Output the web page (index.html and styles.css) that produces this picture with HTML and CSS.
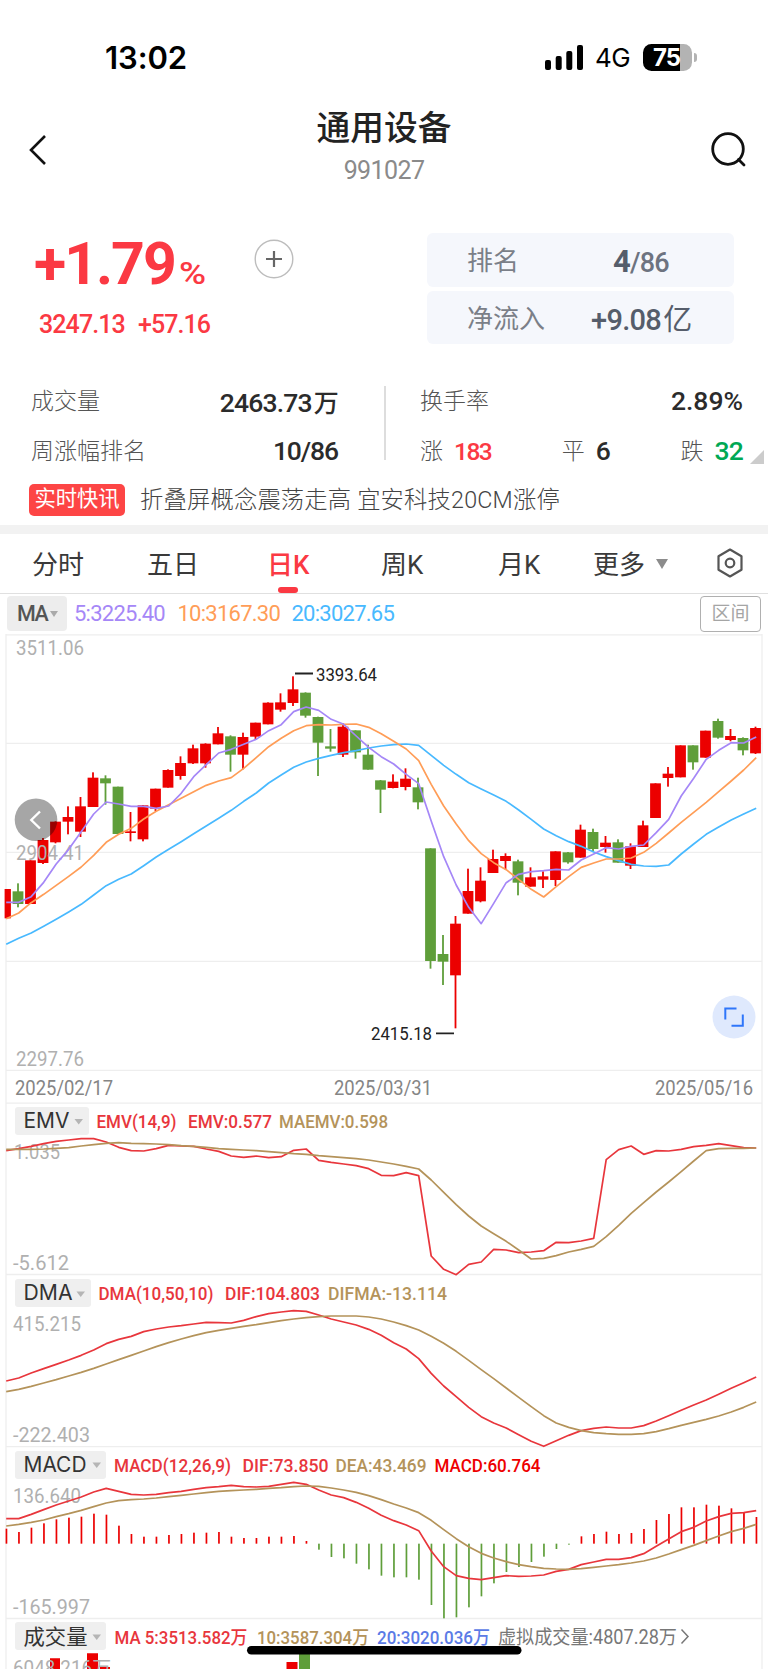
FILE: index.html
```html
<!DOCTYPE html>
<html lang="zh-CN">
<head>
<meta charset="utf-8">
<title>通用设备 991027</title>
<link rel="stylesheet" href="styles.css">
</head>
<body>
<div class="status">
  <span class="clock">13:02</span>
  <span class="status-right">
    <svg class="signal" viewBox="0 0 38 25"><rect x="0" y="15" width="6" height="10" rx="2"/><rect x="10.7" y="11" width="6" height="14" rx="2"/><rect x="21.3" y="6" width="6" height="19" rx="2"/><rect x="32" y="0" width="6" height="25" rx="2"/></svg>
    <span class="net">4G</span>
    <span class="battery"><span class="level">75</span></span><i class="nub"></i>
  </span>
</div>
<header class="header">
  <svg class="back" viewBox="0 0 18 32"><path d="M16 2 2 16 16 30"/></svg>
  <div class="titles"><h1>通用设备</h1><p>991027</p></div>
  <svg class="search" viewBox="0 0 36 36"><circle cx="17" cy="17" r="15.3"/><path d="M27.5 27.5 33 33"/></svg>
</header>
<section class="summary">
  <div class="quote">
    <div class="pct">+1.79<small>%</small></div>
    <div class="price"><span>3247.13</span><span>+57.16</span></div>
  </div>
  <svg class="add" viewBox="0 0 40 40"><circle cx="20" cy="20" r="18.8"/><path d="M12 20H28M20 12V28"/></svg>
  <div class="boxes">
    <div class="box"><span>排名</span><b class="rank"><strong>4</strong>/86</b></div>
    <div class="box"><span>净流入</span><b class="flow">+9.08<em>亿</em></b></div>
  </div>
</section>
<section class="stats">
  <div class="stat-col left">
    <div class="row"><span>成交量</span><b>2463.73<em>万</em></b></div>
    <div class="row"><span>周涨幅排名</span><b class="week">10/86</b></div>
  </div>
  <div class="stat-col right">
    <div class="row"><span>换手率</span><b class="turnover">2.89%</b></div>
    <div class="row"><p><span>涨</span><b class="up">183</b></p><p><span>平</span><b>6</b></p><p><span>跌</span><b class="down">32</b></p></div>
  </div>
  <i class="corner"></i>
</section>
<section class="news"><span class="tag">实时快讯</span><span class="headline">折叠屏概念震荡走高 宜安科技20CM涨停</span></section>
<nav class="tabs">
  <span class="t1">分时</span><span class="t2">五日</span><span class="t3 active">日K</span><span class="t4">周K</span><span class="t5">月K</span><span class="t6">更多</span><i class="caret"></i>
  <svg class="gear" viewBox="0 0 28 30"><path d="M14 1.5 25.5 8.2V21.8L14 28.5 2.5 21.8V8.2Z"/><circle cx="14" cy="15" r="4.3"/></svg>
</nav>
<section class="legend">
  <span class="pill">MA<i></i></span>
  <span class="ma5">5:3225.40</span><span class="ma10">10:3167.30</span><span class="ma20">20:3027.65</span>
  <span class="range">区间</span>
</section>
<main class="charts">
  <svg class="plot" viewBox="0 633 768 470" height="470">
    <path class="grid" d="M6 634.8H762M6 743.3H762M6 852.3H762M6 961.3H762M6 1070.4H762M6 634V1103M762 634V1103"/>
    <g id="candles"></g>
    <g class="axis">
      <text x="16" y="654.6" textLength="68" lengthAdjust="spacingAndGlyphs">3511.06</text>
      <text x="16" y="860" textLength="68" lengthAdjust="spacingAndGlyphs">2904.41</text>
      <text x="16" y="1066" textLength="68" lengthAdjust="spacingAndGlyphs">2297.76</text>
    </g>
    <g id="averages"></g>
    <path class="tick" d="M295 673.5H313M436 1033.3H454"/>
    <g class="mark">
      <text x="316" y="680.5" textLength="61" lengthAdjust="spacingAndGlyphs">3393.64</text>
      <text x="371" y="1039.8" textLength="61" lengthAdjust="spacingAndGlyphs">2415.18</text>
    </g>
    <circle class="prev" cx="36" cy="819.8" r="21.3"/><path class="prev-arrow" d="M40 811.5 31.3 820 40 828.5"/>
    <circle class="expand" cx="734" cy="1017" r="21.5"/><path class="expand-icon" d="M725.3 1019.5V1008.5H736.5M731.5 1025.8H742.8V1014.5"/>
    <g class="date">
      <text x="15" y="1095" textLength="98" lengthAdjust="spacingAndGlyphs">2025/02/17</text>
      <text x="334" y="1095" textLength="98" lengthAdjust="spacingAndGlyphs">2025/03/31</text>
      <text x="655" y="1095" textLength="98" lengthAdjust="spacingAndGlyphs">2025/05/16</text>
    </g>
  </svg>
  <svg class="plot" viewBox="0 1103 768 172" height="172">
    <path class="grid" d="M6 1103.2H762M6 1274.5H762M6 1103V1275M762 1103V1275"/>
    <rect class="chip" x="15" y="1107" width="74" height="28" rx="3"/><text class="name" x="23.5" y="1127.5" textLength="46" lengthAdjust="spacingAndGlyphs">EMV</text><path class="drop" d="M74.5 1119H83L78.7 1124.5Z"/>
    <g class="val">
      <text class="red" x="96.5" y="1128" textLength="80" lengthAdjust="spacingAndGlyphs">EMV(14,9)</text>
      <text class="red" x="188" y="1128" textLength="84" lengthAdjust="spacingAndGlyphs">EMV:0.577</text>
      <text class="tan" x="279" y="1128" textLength="109" lengthAdjust="spacingAndGlyphs">MAEMV:0.598</text>
    </g>
    <g class="axis"><text x="14" y="1159" textLength="46" lengthAdjust="spacingAndGlyphs">1.035</text><text x="13" y="1270" textLength="56" lengthAdjust="spacingAndGlyphs">-5.612</text></g>
    <g id="emv"></g>
  </svg>
  <svg class="plot" viewBox="0 1275 768 172" height="172">
    <path class="grid" d="M6 1446.6H762M6 1275V1447M762 1275V1447"/>
    <rect class="chip" x="15" y="1279" width="76" height="28" rx="3"/><text class="name" x="23.5" y="1299.5" textLength="49" lengthAdjust="spacingAndGlyphs">DMA</text><path class="drop" d="M76.5 1291.5H85L80.7 1297Z"/>
    <g class="val">
      <text class="red" x="98.5" y="1300" textLength="115" lengthAdjust="spacingAndGlyphs">DMA(10,50,10)</text>
      <text class="red" x="225" y="1300" textLength="95" lengthAdjust="spacingAndGlyphs">DIF:104.803</text>
      <text class="tan" x="328" y="1300" textLength="119" lengthAdjust="spacingAndGlyphs">DIFMA:-13.114</text>
    </g>
    <g class="axis"><text x="13" y="1331" textLength="68" lengthAdjust="spacingAndGlyphs">415.215</text><text x="13" y="1442" textLength="77" lengthAdjust="spacingAndGlyphs">-222.403</text></g>
    <g id="dma"></g>
  </svg>
  <svg class="plot" viewBox="0 1447 768 172" height="172">
    <path class="grid" d="M6 1618.5H762M6 1447V1619M762 1447V1619"/>
    <rect class="chip" x="15" y="1451" width="91" height="28" rx="3"/><text class="name" x="23.5" y="1471.5" textLength="63" lengthAdjust="spacingAndGlyphs">MACD</text><path class="drop" d="M92.5 1462.5H101L96.7 1468Z"/>
    <g class="val">
      <text class="red" x="114" y="1472" textLength="117" lengthAdjust="spacingAndGlyphs">MACD(12,26,9)</text>
      <text class="red" x="242.5" y="1472" textLength="86" lengthAdjust="spacingAndGlyphs">DIF:73.850</text>
      <text class="tan" x="335.5" y="1472" textLength="91" lengthAdjust="spacingAndGlyphs">DEA:43.469</text>
      <text class="bright" x="434.5" y="1472" textLength="106" lengthAdjust="spacingAndGlyphs">MACD:60.764</text>
    </g>
    <g class="axis"><text x="13" y="1503" textLength="68" lengthAdjust="spacingAndGlyphs">136.640</text><text x="13" y="1613.6" textLength="77" lengthAdjust="spacingAndGlyphs">-165.997</text></g>
    <g id="macd"></g>
  </svg>
  <svg class="plot" viewBox="0 1619 768 50" height="50">
    <path class="grid" d="M6 1619V1669M762 1619V1669"/>
    <path class="vol-up" d="M50 1658.3H60V1669H50ZM87 1653.3H98V1669H87ZM100 1667H110V1669H100ZM286.5 1662H297.5V1669H286.5Z"/><path class="vol-down" d="M299 1651H310V1669H299Z"/>
    <rect class="chip" x="15" y="1622" width="91" height="28" rx="3"/><text class="name" x="23.5" y="1643.5" textLength="64" lengthAdjust="spacingAndGlyphs">成交量</text><path class="drop" d="M92.5 1634.5H101L96.7 1640Z"/>
    <g class="val">
      <text class="red" x="114.5" y="1644" textLength="133" lengthAdjust="spacingAndGlyphs">MA 5:3513.582万</text>
      <text class="tan" x="257" y="1644" textLength="112" lengthAdjust="spacingAndGlyphs">10:3587.304万</text>
      <text class="blue" x="377" y="1644" textLength="113" lengthAdjust="spacingAndGlyphs">20:3020.036万</text>
      <text class="gray" x="498" y="1643.5" textLength="179" lengthAdjust="spacingAndGlyphs">虚拟成交量:4807.28万</text>
    </g>
    <path class="more" d="M681.5 1629.5 688 1636.5 681.5 1643.5"/>
    <g class="axis"><text x="13" y="1674.5" textLength="98" lengthAdjust="spacingAndGlyphs">6048.216万</text></g>
    <rect class="home" x="247" y="1646" width="274.5" height="8.6" rx="4.3"/>
  </svg>
</main>
<script src="chart.js"></script>
</body>
</html>
```
FILE: styles.css
```css
* { box-sizing: border-box; }
body { margin: 0; width: 768px; height: 1669px; overflow: hidden; background: #fff; color: #333; font-family: Roboto, "Noto Sans CJK SC", sans-serif; }
h1, p { margin: 0; }
em, i { font-style: normal; }
b { font-weight: 500; }
svg { display: block; flex: none; }

.status { height: 100px; padding: 14px 71px 0 105px; display: flex; justify-content: space-between; align-items: center; color: #000; font-family: Inter, sans-serif; }
.clock { font-size: 31px; font-weight: 600; letter-spacing: -.1px; }
.status-right { display: flex; align-items: center; }
.signal { width: 38px; height: 25px; }
.net { font-size: 26px; margin-left: 12px; width: 48px; letter-spacing: -.5px; }
.battery { width: 49px; height: 27px; border-radius: 8.5px; overflow: hidden; background: linear-gradient(90deg, #000 37px, #b3b3b3 37px); }
.level { display: block; padding-left: 10px; font-size: 24px; line-height: 27px; font-weight: 700; color: #fff; letter-spacing: -1px; }
.nub { width: 3px; height: 9px; margin-left: 2px; border-radius: 0 3px 3px 0; background: #b3b3b3; }

.header { height: 100px; padding: 0 21px 0 29px; display: flex; justify-content: space-between; align-items: center; }
.back { width: 18px; height: 32px; fill: none; stroke: #111; stroke-width: 2.6; }
.search { width: 36px; height: 36px; fill: none; stroke: #111; stroke-width: 2.8; stroke-linecap: round; }
.titles { text-align: center; margin: -8px 0 0 10px; }
.titles h1 { font-size: 33.7px; line-height: 40px; font-weight: 500; color: #222; }
.titles p { margin-top: 9px; font-size: 25px; line-height: 26px; color: #8a8a8a; letter-spacing: -.6px; }

.summary { height: 170px; display: flex; padding: 33px 34px 0 34px; align-items: flex-start; }
.quote { width: 221px; color: #fb3943; }
.pct { height: 62px; line-height: 62px; font-size: 59px; font-weight: 700; letter-spacing: -2px; white-space: nowrap; }
.pct small { font-size: 32px; font-weight: 500; margin-left: 4px; display: inline-block; transform: scaleX(1.15); transform-origin: left; }
.price { margin-top: 14px; padding-left: 5px; display: flex; gap: 13px; font-size: 25px; line-height: 32px; font-weight: 500; letter-spacing: -.9px; }
.add { width: 40px; height: 40px; margin: 6px 131px 0 -1px; fill: none; stroke: #bdbdbd; stroke-width: 1.4; }
.add path { stroke: #666; stroke-width: 2.2; }
.boxes { margin-left: auto; width: 307px; display: grid; gap: 4px; }
.box { height: 53.5px; border-radius: 6px; background: #f5f7fc; padding-left: 40px; display: flex; align-items: center; font-size: 26px; color: #7b7f88; }
.box > span { margin-top: -2px; }
.box b { color: #6d7380; font-size: 27px; letter-spacing: -.8px; }
.box .rank { margin-left: 94px; padding-top: 3px; }
.rank strong { font-size: 31px; color: #555d6b; }
.box .flow { margin-left: 46px; font-size: 29px; letter-spacing: -.7px; color: #555d6b; }
.flow em { font-weight: 400; margin-left: 2px; }

.stats { height: 104px; padding: 4px 25px 0 31px; display: flex; position: relative; margin-top: 5px; }
.stat-col { display: grid; grid-template-rows: 50px 50px; }
.left { width: 307px; }
.right { margin-left: 46px; padding-left: 36px; flex: 1; position: relative; }
.right::before { content: ""; position: absolute; left: 0; top: 7px; height: 74px; width: 1.5px; background: #ddd; }
.row { display: flex; justify-content: space-between; align-items: center; height: 40px; font-size: 23px; font-weight: 300; color: #555; }
.row b { font-size: 26.5px; color: #2b2b2b; letter-spacing: -.8px; padding-top: 3px; }
.row .week { letter-spacing: -1.1px; }
.row .turnover { letter-spacing: 0; }
.row em { font-size: 25px; margin-left: 2px; }
.row p { display: flex; align-items: center; gap: 11px; }
.row .up { color: #fb3943; font-size: 24.5px; letter-spacing: -1.5px; padding-top: 4px; }
.row .down { color: #00a854; }
.corner { position: absolute; right: 4px; bottom: 15px; border-style: solid; border-width: 0 0 14px 14px; border-color: transparent transparent #ccc transparent; }

.news { height: 55px; padding: 0 29px 5px; display: flex; align-items: center; border-bottom: 9px solid #f2f2f2; }
.tag { width: 96px; height: 32px; border-radius: 5px; background: #fd4545; color: #fff; font-size: 21.3px; line-height: 30px; text-align: center; }
.headline { margin-left: 15px; font-size: 23.3px; line-height: 30px; color: #444; font-weight: 300; letter-spacing: .18px; white-space: pre; }

.tabs { height: 60px; border-bottom: 1.5px solid #e0e0e0; display: grid; grid-template-columns: 147px 120px 114px 117px 95px 63px 60px 1fr; align-items: center; font-size: 26px; color: #3a3a3a; }
.tabs span { margin-top: -2px; white-space: nowrap; }
.tabs .t1 { padding-left: 32px; }
.active { position: relative; color: #fb3943; font-weight: 500; }
.active::after { content: ""; position: absolute; left: 11px; bottom: -12px; width: 20px; height: 6px; border-radius: 3px; background: #fb3943; }
.caret { justify-self: start; border-style: solid; border-width: 10px 6.5px 0; border-color: #8c8c8c transparent transparent; }
.gear { width: 28px; height: 30px; fill: none; stroke: #555; stroke-width: 2.2; stroke-linejoin: round; margin-top: -2px; }

.legend { height: 39px; display: flex; align-items: center; padding: 0 7px; font-size: 22px; letter-spacing: -.75px; }
.pill { width: 60px; height: 35px; margin-right: 7px; padding-left: 10px; border-radius: 4px; background: #ededed; display: flex; align-items: center; gap: 3px; color: #555; font-size: 21.5px; font-weight: 500; letter-spacing: -1.6px; }
.pill i { border-style: solid; border-width: 6px 4.5px 0; border-color: #aaa transparent transparent; }
.ma5 { width: 103.5px; color: #a587f7; }
.ma10 { width: 114px; color: #ff9d57; }
.ma20 { color: #48b9ff; }
.range { margin-left: auto; width: 61px; height: 36px; border: 1.5px solid #b0b0b0; border-radius: 4px; color: #a5a5a5; font-size: 19px; letter-spacing: 0; line-height: 34px; text-align: center; }

.charts { display: flex; flex-direction: column; }
.plot { width: 768px; overflow: visible; }
.plot text { font-family: Roboto, "Noto Sans CJK SC", sans-serif; }
.grid { fill: none; stroke: #eee; stroke-width: 1.3; }
.axis { fill: #b0b0b0; font-size: 19.6px; }
.date { fill: #858585; font-size: 20px; }
.mark { fill: #222; font-size: 18.5px; }
.tick { stroke: #222; stroke-width: 1.8; }
.up-c { fill: #ec0000; stroke: none; }
.down-c { fill: #5f9e3a; }
.line { fill: none; stroke-width: 1.7; stroke-linejoin: round; }
.l-purple { stroke: #a587f7; }
.l-orange { stroke: #ff9d57; }
.l-blue { stroke: #48b9ff; }
.l-red { stroke: #e8363c; }
.l-tan { stroke: #b4935a; }
.prev { fill: rgba(0, 0, 0, .35); }
.prev-arrow { fill: none; stroke: #fff; stroke-width: 2.4; }
.expand { fill: #dfe9fd; }
.expand-icon { fill: none; stroke: #2f76fa; stroke-width: 2; }
.chip { fill: #efefef; }
.plot .name { font-family: Inter, "Noto Sans CJK SC", sans-serif; font-size: 21px; fill: #333; }
.drop { fill: #b5b5b5; }
.val { font-size: 18px; font-weight: 500; }
.red { fill: #e8363c; }
.tan { fill: #b4935a; }
.bright { fill: #ee0000; }
.blue { fill: #5b7be6; }
.gray { fill: #777; font-size: 19.5px; font-weight: 400; }
.more { fill: none; stroke: #777; stroke-width: 1.5; }
.vol-up { fill: #ec0000; }
.vol-down { fill: #5f9e3a; }
.home { fill: #000; }
```
FILE: chart.js
```js
// One sample every 12.5px; values are in thirds of a pixel below each panel's origin.
const STEP = 12.5, FIRST = 5.5;
const xAt = i => FIRST + STEP * i;
const put = (id, html) => document.getElementById(id).insertAdjacentHTML('beforeend', html);
const line = (id, origin, cls, values) => put(id,
  `<polyline class="line ${cls}" points="${values.map((v, i) => `${xAt(i) + 0.7},${(origin + v / 3).toFixed(2)}`).join(' ')}"/>`);

// [high, body top, body bottom, low, falling]
const candles = [
  [777,777,865,865],[760,784,822,832,1],[691,691,822,822],[624,630,699,702],[574,575,637,640],[529,561,575,613],
  [501,529,605,621],[427,443,531,531],[436,445,460,524,1],[470,470,612,612,1],[546,604,609,634],[525,526,628,634],
  [476,476,536,543],[418,420,473,473],[379,399,438,449],[344,355,400,402],[340,341,400,413],[291,310,343,343],
  [316,319,374,425,1],[308,321,374,418],[278,278,320,330],[217,218,283,283],[190,217,239,245],[139,178,219,228],
  [187,188,257,263,1],[260,261,338,438,1],[297,349,356,365,1],[280,290,374,381],[301,301,367,386,1],[344,374,419,419,1],
  [450,451,479,549,1],[433,455,474,475],[415,446,471,481],[443,472,517,538,1],[655,655,993,1016,1],[915,972,995,1065,1],
  [858,881,1036,1195],[716,783,851,851],[712,752,814,817],[659,687,729,729],[670,678,693,718],[689,694,758,796,1],
  [712,742,770,770],[724,739,749,774],[664,664,750,768],[666,667,697,701,1],[584,599,683,683],[596,606,657,663,1],
  [618,638,651,668],[628,637,698,698,1],[640,649,707,717],[572,586,651,651],[460,460,564,564],[411,431,444,470],
  [346,346,442,442],[346,346,397,419,1],[302,302,383,383],[266,273,323,326,1],[297,318,330,334],[322,324,361,376,1],
  [290,294,370,372]
];
candles.forEach(([high, top, bottom, low, falling], i) => {
  const x = xAt(i), left = Math.max(6, x - 5.4), y = v => 630 + v / 3;
  put('candles', `<g class="${falling ? 'down-c' : 'up-c'}"><rect x="${left}" y="${y(top)}" width="${x + 5.4 - left}" height="${(bottom - top) / 3}"/><rect x="${x - 0.9}" y="${y(high)}" width="1.8" height="${(low - high) / 3}"/></g>`);
});

line('averages', 630, 'l-blue', [943,925,909,889,868,846,823,795,767,748,732,707,681,658,635,611,588,565,541,514,489,459,435,412,396,385,376,368,362,354,348,344,342,346,376,406,433,458,477,495,514,540,568,597,617,635,649,666,680,692,703,708,709,705,672,642,613,591,570,552,535]);
line('averages', 630, 'l-orange', [866,849,818,793,766,739,711,676,637,613,595,567,544,524,505,485,466,453,443,415,383,350,325,302,287,284,285,283,282,292,311,334,357,392,463,528,582,632,671,698,719,748,778,801,770,740,712,699,687,687,684,667,640,609,577,547,517,485,453,420,383]);
line('averages', 630, 'l-purple', [817,817,800,757,702,658,605,552,516,522,529,529,535,528,490,440,404,369,358,343,328,302,284,245,231,241,268,283,318,352,380,402,433,461,573,680,765,832,881,820,758,733,725,722,718,720,690,672,653,657,649,645,608,568,498,445,388,361,338,339,321]);

line('emv', 1080, 'l-red', [212,206,199,191,184,180,176,176,186,202,212,213,206,196,198,199,207,214,228,232,228,233,230,211,207,241,247,252,257,266,286,287,278,287,528,568,584,553,546,508,510,518,516,512,487,488,483,475,239,209,198,223,212,213,208,200,196,191,197,203,204]);
line('emv', 1080, 'l-tan', [208,208,208,207,205,203,198,194,190,188,190,191,192,194,197,199,202,206,208,210,212,215,218,221,223,227,230,233,236,240,246,252,259,267,300,337,374,408,438,461,484,510,537,535,527,516,508,499,470,436,400,368,336,306,275,243,212,206,205,205,204]);

line('dma', 1270, 'l-red', [333,324,309,296,283,270,256,240,221,208,199,185,177,171,167,162,157,158,159,151,140,131,126,122,124,135,147,156,165,178,196,218,237,266,310,348,380,412,440,459,474,494,514,529,512,496,482,475,471,474,474,467,453,437,421,405,390,373,355,338,321]);
line('dma', 1270, 'l-tan', [365,358,349,339,329,318,307,295,282,269,256,243,230,218,207,197,188,181,175,169,164,158,152,147,143,140,138,138,138,141,147,156,167,180,199,220,244,271,299,326,354,382,410,437,459,472,482,488,491,493,493,491,485,476,466,457,448,438,426,412,396]);

const bars = [266,276,263,250,238,233,230,221,224,257,282,290,290,285,282,278,278,276,290,294,294,290,290,288,303,329,351,355,371,388,407,412,412,419,495,535,532,502,469,430,396,381,366,350,327,314,289,282,275,282,279,267,240,222,202,202,194,197,205,219,231];
bars.forEach((v, i) => {
  const top = Math.min(v, 311), height = Math.abs(v - 311) / 3;
  put('macd', `<rect class="${v > 311 ? 'down-c' : 'up-c'}" x="${xAt(i) + 0.1}" y="${1440 + top / 3}" width="1.7" height="${height}"/>`);
});
line('macd', 1440, 'l-red', [236,236,223,209,195,183,171,156,145,154,163,165,163,158,154,148,143,140,136,140,141,139,133,127,133,150,165,173,187,205,226,242,255,272,333,380,407,415,419,413,407,409,408,405,394,388,374,366,358,358,353,341,319,297,275,262,243,230,220,218,212]);
line('macd', 1440, 'l-tan', [258,253,247,240,230,221,211,200,189,182,179,177,174,170,166,162,158,154,152,150,148,145,143,140,138,139,144,150,157,167,179,192,204,218,241,269,296,320,340,354,365,374,380,385,387,388,386,382,378,374,369,363,354,342,329,316,302,288,275,265,253]);
```
